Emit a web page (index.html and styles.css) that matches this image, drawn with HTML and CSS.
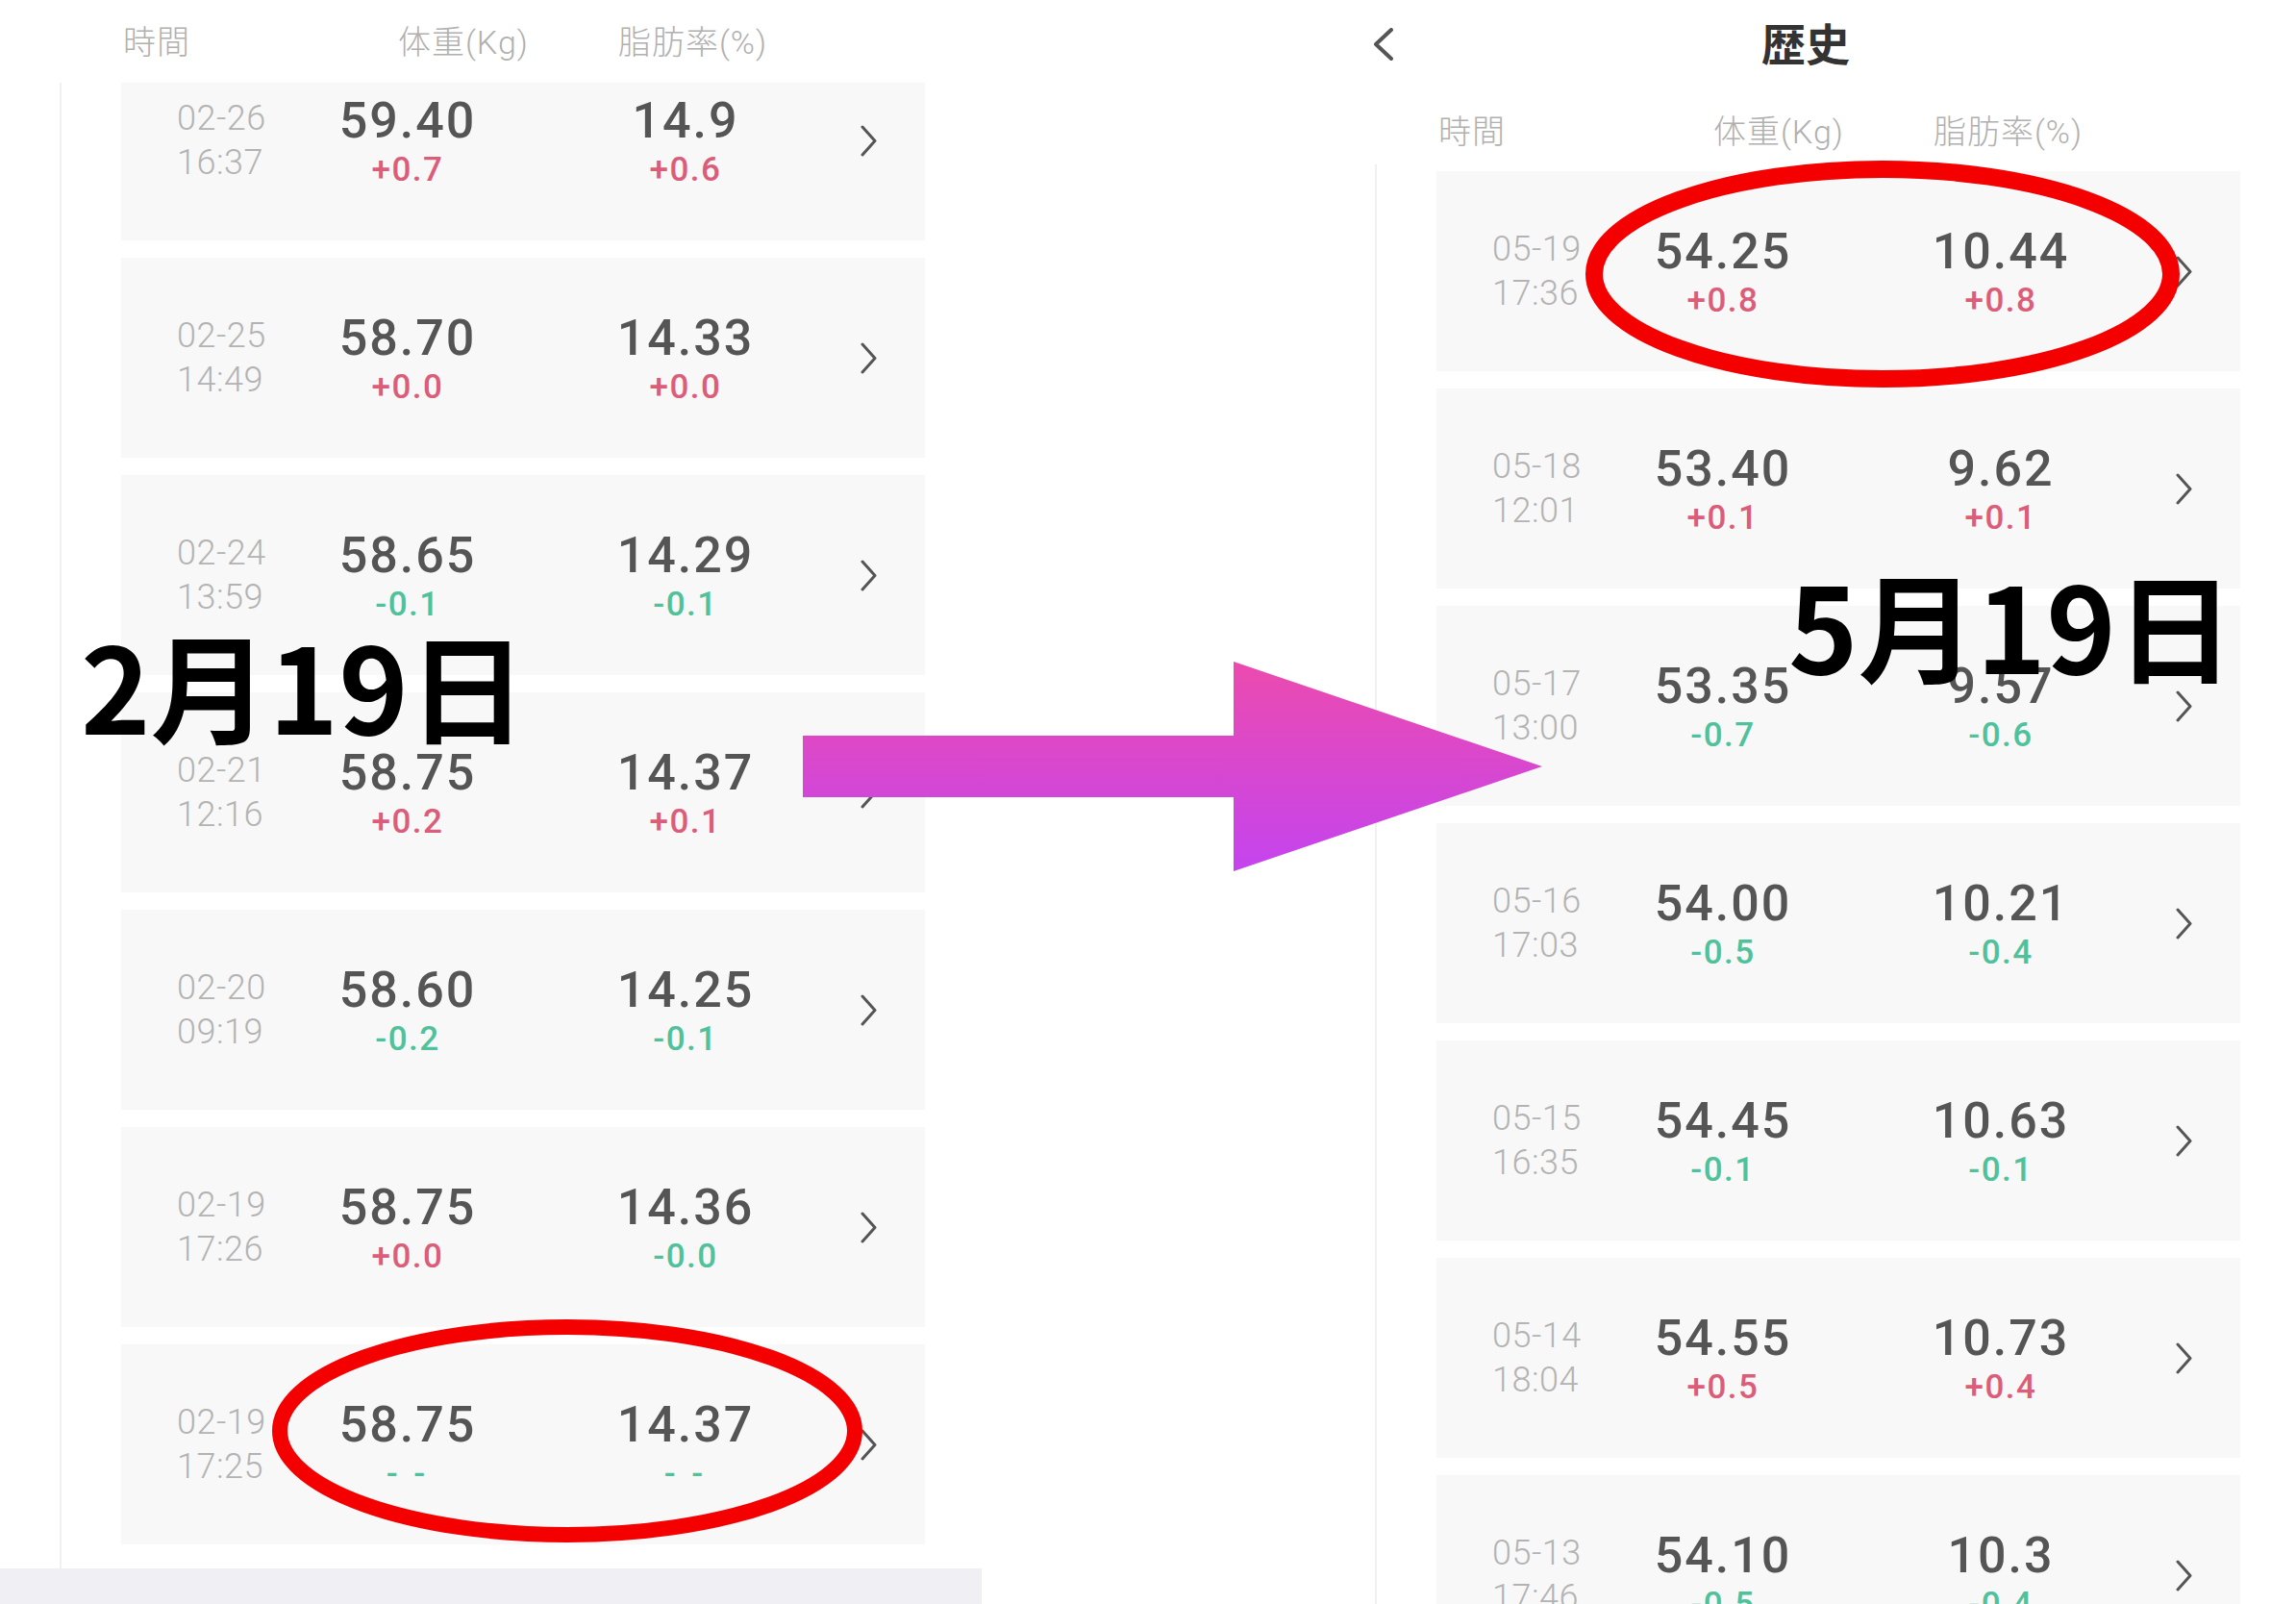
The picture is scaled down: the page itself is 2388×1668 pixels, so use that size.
FILE: index.html
```html
<!DOCTYPE html>
<html lang="ja">
<head>
  <meta charset="UTF-8">
  <title>体重の比較 - 歴史</title>
  <link rel="stylesheet" href="styles.css">
</head>
<body>

<div class="stage">

  <!-- Before: February -->
  <div class="phone">
    <div class="cols">
      <span class="h-time">時間</span>
      <span class="h-weight">体重(Kg)</span>
      <span class="h-fat">脂肪率(%)</span>
    </div>
    <div class="list">
      <div class="track scrolled">
        <div class="card">
          <div class="when"><div>02-26</div><div>16:37</div></div>
          <div class="metric"><div class="val">59.40</div><div class="delta up">+0.7</div></div>
          <div class="metric"><div class="val">14.9</div><div class="delta up">+0.6</div></div>
          <svg class="chev" width="19" height="33" viewBox="0 0 19 33"><polyline points="3,2 16,16.5 3,31"/></svg>
        </div>
        <div class="card">
          <div class="when"><div>02-25</div><div>14:49</div></div>
          <div class="metric"><div class="val">58.70</div><div class="delta up">+0.0</div></div>
          <div class="metric"><div class="val">14.33</div><div class="delta up">+0.0</div></div>
          <svg class="chev" width="19" height="33" viewBox="0 0 19 33"><polyline points="3,2 16,16.5 3,31"/></svg>
        </div>
        <div class="card">
          <div class="when"><div>02-24</div><div>13:59</div></div>
          <div class="metric"><div class="val">58.65</div><div class="delta down">-0.1</div></div>
          <div class="metric"><div class="val">14.29</div><div class="delta down">-0.1</div></div>
          <svg class="chev" width="19" height="33" viewBox="0 0 19 33"><polyline points="3,2 16,16.5 3,31"/></svg>
        </div>
        <div class="card">
          <div class="when"><div>02-21</div><div>12:16</div></div>
          <div class="metric"><div class="val">58.75</div><div class="delta up">+0.2</div></div>
          <div class="metric"><div class="val">14.37</div><div class="delta up">+0.1</div></div>
          <svg class="chev" width="19" height="33" viewBox="0 0 19 33"><polyline points="3,2 16,16.5 3,31"/></svg>
        </div>
        <div class="card">
          <div class="when"><div>02-20</div><div>09:19</div></div>
          <div class="metric"><div class="val">58.60</div><div class="delta down">-0.2</div></div>
          <div class="metric"><div class="val">14.25</div><div class="delta down">-0.1</div></div>
          <svg class="chev" width="19" height="33" viewBox="0 0 19 33"><polyline points="3,2 16,16.5 3,31"/></svg>
        </div>
        <div class="card">
          <div class="when"><div>02-19</div><div>17:26</div></div>
          <div class="metric"><div class="val">58.75</div><div class="delta up">+0.0</div></div>
          <div class="metric"><div class="val">14.36</div><div class="delta down">-0.0</div></div>
          <svg class="chev" width="19" height="33" viewBox="0 0 19 33"><polyline points="3,2 16,16.5 3,31"/></svg>
        </div>
        <div class="card">
          <div class="when"><div>02-19</div><div>17:25</div></div>
          <div class="metric"><div class="val">58.75</div><div class="delta down none">- -</div></div>
          <div class="metric"><div class="val">14.37</div><div class="delta down none">- -</div></div>
          <svg class="chev" width="19" height="33" viewBox="0 0 19 33"><polyline points="3,2 16,16.5 3,31"/></svg>
        </div>
      </div>
    </div>
    <div class="tabbar"></div>
  </div>

  <!-- After: May -->
  <div class="phone">
    <div class="titlebar">
      <svg class="back" width="23" height="34" viewBox="0 0 23 34"><polyline points="20,2 4,17 20,32"/></svg>
      <h1>歴史</h1>
    </div>
    <div class="cols">
      <span class="h-time">時間</span>
      <span class="h-weight">体重(Kg)</span>
      <span class="h-fat">脂肪率(%)</span>
    </div>
    <div class="list">
      <div class="track">
        <div class="card">
          <div class="when"><div>05-19</div><div>17:36</div></div>
          <div class="metric"><div class="val">54.25</div><div class="delta up">+0.8</div></div>
          <div class="metric"><div class="val">10.44</div><div class="delta up">+0.8</div></div>
          <svg class="chev" width="19" height="33" viewBox="0 0 19 33"><polyline points="3,2 16,16.5 3,31"/></svg>
        </div>
        <div class="card">
          <div class="when"><div>05-18</div><div>12:01</div></div>
          <div class="metric"><div class="val">53.40</div><div class="delta up">+0.1</div></div>
          <div class="metric"><div class="val">9.62</div><div class="delta up">+0.1</div></div>
          <svg class="chev" width="19" height="33" viewBox="0 0 19 33"><polyline points="3,2 16,16.5 3,31"/></svg>
        </div>
        <div class="card">
          <div class="when"><div>05-17</div><div>13:00</div></div>
          <div class="metric"><div class="val">53.35</div><div class="delta down">-0.7</div></div>
          <div class="metric"><div class="val">9.57</div><div class="delta down">-0.6</div></div>
          <svg class="chev" width="19" height="33" viewBox="0 0 19 33"><polyline points="3,2 16,16.5 3,31"/></svg>
        </div>
        <div class="card">
          <div class="when"><div>05-16</div><div>17:03</div></div>
          <div class="metric"><div class="val">54.00</div><div class="delta down">-0.5</div></div>
          <div class="metric"><div class="val">10.21</div><div class="delta down">-0.4</div></div>
          <svg class="chev" width="19" height="33" viewBox="0 0 19 33"><polyline points="3,2 16,16.5 3,31"/></svg>
        </div>
        <div class="card">
          <div class="when"><div>05-15</div><div>16:35</div></div>
          <div class="metric"><div class="val">54.45</div><div class="delta down">-0.1</div></div>
          <div class="metric"><div class="val">10.63</div><div class="delta down">-0.1</div></div>
          <svg class="chev" width="19" height="33" viewBox="0 0 19 33"><polyline points="3,2 16,16.5 3,31"/></svg>
        </div>
        <div class="card">
          <div class="when"><div>05-14</div><div>18:04</div></div>
          <div class="metric"><div class="val">54.55</div><div class="delta up">+0.5</div></div>
          <div class="metric"><div class="val">10.73</div><div class="delta up">+0.4</div></div>
          <svg class="chev" width="19" height="33" viewBox="0 0 19 33"><polyline points="3,2 16,16.5 3,31"/></svg>
        </div>
        <div class="card">
          <div class="when"><div>05-13</div><div>17:46</div></div>
          <div class="metric"><div class="val">54.10</div><div class="delta down">-0.5</div></div>
          <div class="metric"><div class="val">10.3</div><div class="delta down">-0.4</div></div>
          <svg class="chev" width="19" height="33" viewBox="0 0 19 33"><polyline points="3,2 16,16.5 3,31"/></svg>
        </div>
      </div>
    </div>
  </div>

</div>

<!-- Annotations drawn over the screenshots -->
<svg class="marks" width="2388" height="1668" viewBox="0 0 2388 1668">
  <defs>
    <linearGradient id="arrowFill" x1="0" y1="688" x2="0" y2="906" gradientUnits="userSpaceOnUse">
      <stop offset="0" stop-color="#ec4bae"/>
      <stop offset="1" stop-color="#c444ef"/>
    </linearGradient>
  </defs>
  <polygon fill="url(#arrowFill)" points="835,765 1283,765 1283,688 1604,797 1283,906 1283,829 835,829"/>
  <ellipse cx="590" cy="1488" rx="299" ry="108" fill="none" stroke="#f50000" stroke-width="16"/>
  <ellipse cx="1958" cy="285" rx="300" ry="109" fill="none" stroke="#f50000" stroke-width="18"/>
</svg>

<div class="stamp stamp-feb">2月19日</div>
<div class="stamp stamp-may">5月19日</div>

</body>
</html>
```

FILE: styles.css
```css
body {
  margin: 0;
  width: 2388px;
  height: 1668px;
  position: relative;
  overflow: hidden;
  background: #fff;
  font-family: Roboto, "Noto Sans CJK JP", sans-serif;
  color: #555;
}

.stage {
  display: flex;
  justify-content: space-between;
  height: 1668px;
}

.phone {
  width: 1020px;
  height: 1668px;
  display: flex;
  flex-direction: column;
  padding-top: 4px;
  box-sizing: border-box;
}

.phone:last-child {
  padding-top: 0;
}

/* Title bar (only on the second screenshot) */
.titlebar {
  position: relative;
  height: 95px;
  display: flex;
  align-items: center;
  justify-content: center;
  padding-bottom: 2px;
}

.titlebar h1 {
  margin: 0 0 10px 0;
  font-family: "Noto Sans CJK JP", sans-serif;
  font-size: 46px;
  font-weight: 700;
  color: #333;
}

.back {
  position: absolute;
  left: 59px;
  top: 29px;
}

.back polyline {
  fill: none;
  stroke: #555;
  stroke-width: 4;
  stroke-linecap: round;
  stroke-linejoin: round;
}

/* Column labels */
.cols {
  height: 82px;
  display: flex;
  align-items: center;
  padding-left: 128px;
  font-family: Roboto, "Noto Sans CJK JP", sans-serif;
  font-size: 34px;
  font-weight: 300;
  letter-spacing: 1px;
  color: #b0b0b0;
  flex-shrink: 0;
  box-sizing: border-box;
  padding-bottom: 8px;
}

.phone:last-child .cols {
  height: 74px;
  padding-bottom: 0;
}

.h-time { width: 286px; }
.h-weight { width: 229px; }

/* Record list */
.list {
  flex: 1;
  overflow: hidden;
  margin-left: 62px;
  border-left: 2px solid #f0f0f0;
  padding-left: 62px;
}

.track {
  padding-top: 7px;
}

.track.scrolled {
  padding-top: 0;
  margin-top: -44px;
}

.card {
  width: 836px;
  height: 208px;
  margin-bottom: 18px;
  background: #f8f8f8;
  display: flex;
  align-items: center;
  padding-left: 58px;
  box-sizing: border-box;
}

.when {
  width: 140px;
  font-size: 36px;
  font-weight: 300;
  line-height: 46px;
  letter-spacing: 0.5px;
  color: #b3b3b3;
}

.metric {
  width: 200px;
  text-align: center;
  padding-top: 2px;
}

.metric + .metric {
  margin-left: 89px;
}

.val {
  font-size: 52px;
  font-weight: 500;
  line-height: 56px;
  letter-spacing: 2px;
  color: #555;
}

.delta {
  margin-top: 3px;
  font-size: 35px;
  font-weight: 500;
  line-height: 40px;
  letter-spacing: 1.5px;
}

.delta.up { color: #dc5d79; }
.delta.down { color: #4fc29c; }
.delta.none { letter-spacing: 4px; }

.chev {
  margin-left: 81px;
}

.chev polyline {
  fill: none;
  stroke: #555;
  stroke-width: 3;
  stroke-linecap: round;
  stroke-linejoin: round;
}

.tabbar {
  height: 37px;
  margin-right: -1px;
  background: #efeff4;
  flex-shrink: 0;
}

/* Overlays */
.marks {
  position: absolute;
  left: 0;
  top: 0;
  pointer-events: none;
}

.stamp {
  position: absolute;
  font-family: "Noto Sans CJK JP", sans-serif;
  font-size: 123px;
  font-weight: 700;
  line-height: 1;
  color: #000;
  white-space: nowrap;
}

.stamp-feb {
  left: 84px;
  top: 649px;
}

.stamp-may {
  left: 1860px;
  top: 586px;
}
```
